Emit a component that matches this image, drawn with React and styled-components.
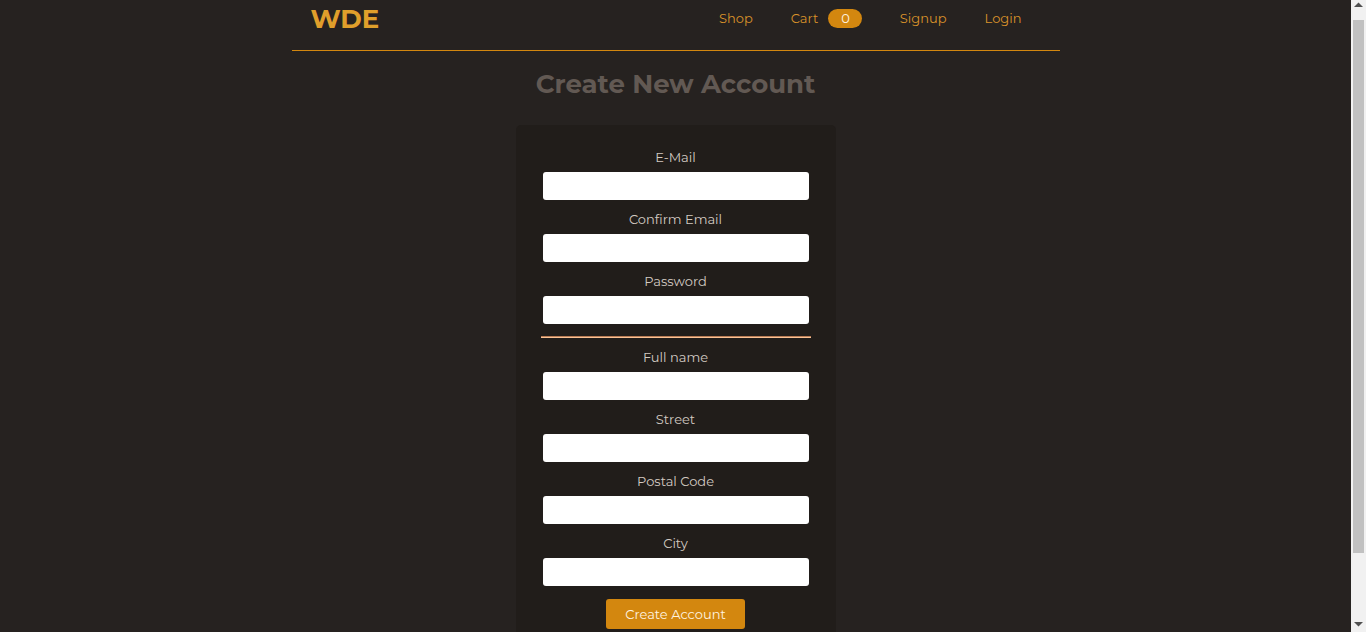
import React from "react";
import styled, { createGlobalStyle } from "styled-components";

const GlobalStyle = createGlobalStyle`
  * { box-sizing: border-box; }
  body {
    margin: 0;
    background: #262220;
    color: #d3cac2;
    font-family: Montserrat, Inter, sans-serif;
    font-size: 13px;
    line-height: 16px;
  }
`;

const Shell = styled.div`
  display: flex;
  height: 100vh;
  overflow: hidden;
`;

const Page = styled.div`
  flex: 1;
  min-width: 0;
  overflow: hidden;
`;

const Header = styled.header`
  display: flex;
  align-items: center;
  justify-content: space-between;
  width: 90%;
  max-width: 768px;
  margin: 0 auto;
  padding: 3px 19px 15px;
  border-bottom: 1px solid #d3870f;
`;

const Logo = styled.a`
  color: #e09f2b;
  font-size: 26px;
  font-weight: 700;
  line-height: 32px;
  text-decoration: none;
`;

const NavList = styled.ul`
  display: flex;
  gap: 38px;
  margin: 0;
  padding: 0 19px 2px 0;
  list-style: none;
`;

const NavLink = styled.a`
  display: flex;
  align-items: center;
  gap: 10px;
  height: 20px;
  color: #d9922a;
  text-decoration: none;
`;

const Badge = styled.span`
  padding: 1px 12px 2px 13px;
  border-radius: 10px;
  background: #d3870f;
  color: #fff3e0;
`;

const Main = styled.main`
  padding: 0 16px;
`;

const Title = styled.h1`
  margin: 17px 0 25px;
  color: #625953;
  font-size: 26px;
  font-weight: 700;
  line-height: 32px;
  text-align: center;
`;

const Form = styled.form`
  display: flex;
  flex-direction: column;
  max-width: 320px;
  margin: 0 auto;
  padding: 24px 25px;
  border-radius: 5px;
  background: #211d1a;
`;

const Field = styled.div`
  display: flex;
  flex-direction: column;
  gap: 7px;
  margin: 0 2px 11px;
  text-align: center;
`;

const Input = styled.input`
  width: 100%;
  height: 28px;
  padding: 4px;
  border: 0;
  border-radius: 3px;
  background: #fff;
  font: inherit;
`;

const Divider = styled.hr`
  width: 100%;
  height: 2px;
  margin: 1px 0 11px;
  border: 0;
  border-top: 1px solid #b87c55;
  background: #fbc396;
`;

const Submit = styled.button`
  align-self: center;
  height: 30px;
  margin-top: 2px;
  padding: 0 19px 1px;
  border: 0;
  border-radius: 3px;
  background: #d3870f;
  color: #fff3e0;
  font: inherit;
  cursor: pointer;
`;

const ScrollTrack = styled.div`
  display: flex;
  flex-direction: column;
  align-items: center;
  justify-content: space-between;
  width: 15px;
  background: #f1f1f1;
`;

const ScrollThumb = styled.div`
  flex: 1;
  width: 11px;
  margin-bottom: 62px;
  background: #c1c1c1;
`;

const ArrowIcon = styled.svg`
  display: block;
  flex: none;
  width: 15px;
  height: ${(p) => (p.$down ? 17 : 20)}px;
`;

const accountFields = [
  { id: "email", label: "E-Mail", type: "email" },
  { id: "confirm-email", label: "Confirm Email", type: "email" },
  { id: "password", label: "Password", type: "password" },
];

const addressFields = [
  { id: "fullname", label: "Full name", type: "text" },
  { id: "street", label: "Street", type: "text" },
  { id: "postal", label: "Postal Code", type: "text" },
  { id: "city", label: "City", type: "text" },
];

function FormField({ id, label, type }) {
  return (
    <Field>
      <label htmlFor={id}>{label}</label>
      <Input id={id} name={id} type={type} />
    </Field>
  );
}

export default function App() {
  return (
    <>
      <GlobalStyle />
      <Shell>
        <Page>
          <Header>
            <Logo href="#">WDE</Logo>
            <nav>
              <NavList>
                <li><NavLink href="#shop">Shop</NavLink></li>
                <li><NavLink href="#cart">Cart <Badge>0</Badge></NavLink></li>
                <li><NavLink href="#signup">Signup</NavLink></li>
                <li><NavLink href="#login">Login</NavLink></li>
              </NavList>
            </nav>
          </Header>
          <Main>
            <Title>Create New Account</Title>
            <Form onSubmit={(e) => e.preventDefault()}>
              {accountFields.map((f) => <FormField key={f.id} {...f} />)}
              <Divider />
              {addressFields.map((f) => <FormField key={f.id} {...f} />)}
              <Submit type="submit">Create Account</Submit>
            </Form>
          </Main>
        </Page>
        <ScrollTrack aria-hidden="true">
          <ArrowIcon viewBox="0 0 15 20">
            <path d="M3 7 L7.5 2.5 L12 7 Z" fill="#505050" />
          </ArrowIcon>
          <ScrollThumb />
          <ArrowIcon $down viewBox="0 0 15 17">
            <path d="M3 7 L7.5 11.5 L12 7 Z" fill="#505050" />
          </ArrowIcon>
        </ScrollTrack>
      </Shell>
    </>
  );
}
